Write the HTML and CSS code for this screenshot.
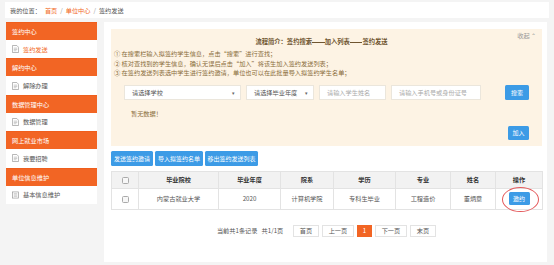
FILE: index.html
```
<!DOCTYPE html>
<html lang="zh-CN">
<head>
    <meta charset="UTF-8">
    <meta name="viewport" content="width=device-width, initial-scale=1.0">
    <title>签约发送</title>
    <link rel="stylesheet" href="styles.css">
</head>
<body>
    <div class="pagina">
        <div class="migas">
            <span>我的位置：</span>
            <a class="miga-link">首页</a>
            <span class="sep">/</span>
            <a class="miga-link">单位中心</a>
            <span class="sep">/</span>
            <span class="miga-actual">签约发送</span>
        </div>

        <div class="cuerpo">
            <div class="menu">
                <div class="menu-titulo">签约中心</div>
                <div class="menu-item activo">
                    <svg class="menu-icono" viewBox="0 0 8 9"><path d="M0.5 0.5h5l2 2v6h-7z" fill="#fff" stroke="#999" stroke-width="0.8"/><path d="M2 3.5h4M2 5h4M2 6.5h3" stroke="#aaa" stroke-width="0.7"/></svg>
                    签约发送
                </div>
                <div class="menu-titulo">解约中心</div>
                <div class="menu-item">
                    <svg class="menu-icono" viewBox="0 0 8 9"><path d="M0.5 0.5h5l2 2v6h-7z" fill="#fff" stroke="#999" stroke-width="0.8"/><path d="M2 3.5h4M2 5h4M2 6.5h3" stroke="#aaa" stroke-width="0.7"/></svg>
                    解除办理
                </div>
                <div class="menu-titulo">数据管理中心</div>
                <div class="menu-item">
                    <svg class="menu-icono" viewBox="0 0 8 9"><path d="M0.5 0.5h5l2 2v6h-7z" fill="#fff" stroke="#999" stroke-width="0.8"/><path d="M2 3.5h4M2 5h4M2 6.5h3" stroke="#aaa" stroke-width="0.7"/></svg>
                    数据管理
                </div>
                <div class="menu-titulo">网上就业市场</div>
                <div class="menu-item">
                    <svg class="menu-icono" viewBox="0 0 8 9"><path d="M0.5 0.5h5l2 2v6h-7z" fill="#fff" stroke="#999" stroke-width="0.8"/><path d="M2 3.5h4M2 5h4M2 6.5h3" stroke="#aaa" stroke-width="0.7"/></svg>
                    我要招聘
                </div>
                <div class="menu-titulo">单位信息维护</div>
                <div class="menu-item">
                    <svg class="menu-icono" viewBox="0 0 8 9"><rect x="0.5" y="1" width="7" height="7" fill="#fff" stroke="#999" stroke-width="0.8"/><path d="M2 3h4M2 4.5h4M2 6h4" stroke="#aaa" stroke-width="0.7"/></svg>
                    基本信息维护
                </div>
            </div>

            <div class="contenido">
                <div class="aviso">
                    <div class="aviso-cabecera">
                        <span></span>
                        <div class="aviso-titulo">流程简介：签约搜索<span class="raya"></span>加入列表<span class="raya"></span>签约发送</div>
                        <span class="recoger">收起 <span class="flecha">&#8963;</span></span>
                    </div>
                    <div class="aviso-linea">① 在搜索栏输入拟签约学生信息，点击“搜索”进行查找；</div>
                    <div class="aviso-linea">② 核对查找到的学生信息，确认无误后点击“加入”将该生加入签约发送列表；</div>
                    <div class="aviso-linea">③ 在签约发送列表选中学生进行签约邀请，单位也可以在此批量导入拟签约学生名单；</div>

                    <div class="filtros">
                        <div class="campo selector escuela">请选择学校<span class="triangulo">&#9662;</span></div>
                        <div class="campo selector anio">请选择毕业年度<span class="triangulo">&#9662;</span></div>
                        <div class="campo nombre">请输入学生姓名</div>
                        <div class="campo telefono">请输入手机号或身份证号</div>
                        <button class="boton buscar">搜索</button>
                    </div>

                    <div class="vacio">暂无数据！</div>
                    <div class="fila-agregar">
                        <button class="boton agregar">加入</button>
                    </div>
                </div>

                <div class="acciones">
                    <button class="boton accion">发送签约邀请</button>
                    <button class="boton accion">导入拟签约名单</button>
                    <button class="boton accion">移出签约发送列表</button>
                </div>

                <table class="tabla">
                    <thead>
                        <tr>
                            <th class="col-check"><span class="casilla"></span></th>
                            <th class="col-escuela">毕业院校</th>
                            <th class="col-anio">毕业年度</th>
                            <th class="col-facultad">院系</th>
                            <th class="col-titulo">学历</th>
                            <th class="col-carrera">专业</th>
                            <th class="col-nombre">姓名</th>
                            <th class="col-op">操作</th>
                        </tr>
                    </thead>
                    <tbody>
                        <tr>
                            <td><span class="casilla"></span></td>
                            <td>内蒙古就业大学</td>
                            <td>2020</td>
                            <td>计算机学院</td>
                            <td>专科生毕业</td>
                            <td>工程造价</td>
                            <td>董炳意</td>
                            <td class="celda-op">
                                <button class="boton invitar">邀约</button>
                                <span class="marca"></span>
                            </td>
                        </tr>
                    </tbody>
                </table>

                <div class="paginacion">
                    <span class="resumen">当前共1条记录&nbsp;&nbsp;&nbsp;共1/1页</span>
                    <span class="pag-boton">首页</span>
                    <span class="pag-boton">上一页</span>
                    <span class="pag-boton actual">1</span>
                    <span class="pag-boton">下一页</span>
                    <span class="pag-boton">末页</span>
                </div>
            </div>
        </div>
    </div>
</body>
</html>
```

FILE: styles.css
```
* {
    box-sizing: border-box;
}

body {
    margin: 0;
    background: #f4f4f4;
    font-family: "Noto Sans CJK SC", "Noto Sans", sans-serif;
    font-size: 6.2px;
    color: #555;
}

.pagina {
    width: 554px;
    height: 265px;
    padding: 2px 5px 0 5px;
}

/* barra de ubicacion */
.migas {
    height: 16px;
    background: #fff;
    display: flex;
    align-items: center;
    padding-left: 5px;
    color: #555;
}

.migas span:first-child {
    margin-right: 4px;
}

.miga-link {
    color: #f26a25;
}

.sep {
    color: #999;
    margin: 0 3px;
}

.miga-actual {
    color: #555;
}

.cuerpo {
    display: flex;
    gap: 7px;
    margin-top: 4px;
    height: 240px;
}

/* menu lateral */
.menu {
    width: 91px;
    margin-left: 1px;
}

.menu-titulo {
    height: 18px;
    line-height: 18px;
    background: #f26524;
    color: #fff;
    padding-left: 6px;
    border-top: 1px solid #ef5e1c;
}

.menu-item {
    height: 18.4px;
    background: #fff;
    display: flex;
    align-items: center;
    gap: 4px;
    padding-left: 6px;
    color: #555;
}

.menu-item.activo {
    color: #f26a25;
}

.menu-icono {
    width: 7px;
    height: 8px;
}

/* contenido */
.contenido {
    width: 443px;
    background: #fff;
    padding: 7px 5px 0 7px;
}

.aviso {
    background: #fdf3e4;
    padding: 2px 13px 6px 3px;
    color: #8a6d3b;
}

.aviso-cabecera {
    display: grid;
    grid-template-columns: 1fr auto 1fr;
    align-items: start;
}

.aviso-titulo {
    margin-top: 6px;
    line-height: 10px;
    font-weight: bold;
    font-size: 6.3px;
    color: #6f5530;
}

/* raya larga entre pasos */
.raya {
    display: inline-block;
    width: 12.6px;
    height: 0.8px;
    background: #6f5530;
    vertical-align: middle;
}

.recoger {
    justify-self: end;
    margin-right: -7px;
    line-height: 10px;
    color: #999;
}

.flecha {
    font-size: 6px;
}

.aviso-linea {
    line-height: 9.5px;
}

.aviso-cabecera + .aviso-linea {
    margin-top: 2px;
}

.filtros {
    display: flex;
    gap: 5px;
    margin-top: 7px;
    padding-left: 10px;
}

.campo {
    height: 15px;
    background: #fff;
    border: 1px solid #ebe6dc;
    display: flex;
    align-items: center;
    padding-left: 7px;
    color: #aaa;
}

.selector {
    color: #555;
    justify-content: space-between;
    padding-right: 5px;
}

.triangulo {
    font-size: 5px;
    color: #666;
}

.escuela {
    width: 117px;
}

.anio {
    width: 68px;
}

.nombre {
    width: 67px;
}

.telefono {
    width: 90px;
}

.boton {
    border: none;
    border-radius: 1.5px;
    background: #3c9be6;
    color: #fff;
    font-family: inherit;
    font-size: 6px;
    padding: 0;
    cursor: pointer;
}

.buscar {
    width: 24px;
    height: 15px;
    margin-left: auto;
}

.vacio {
    margin-top: 9px;
    padding-left: 17px;
    line-height: 10px;
}

.fila-agregar {
    display: flex;
    justify-content: flex-end;
    margin-top: 7px;
}

.agregar {
    width: 21px;
    height: 14px;
}

/* acciones */
.acciones {
    display: flex;
    gap: 2px;
    margin-top: 5px;
}

.accion {
    height: 15px;
}

.acciones .accion:nth-child(1) {
    width: 42px;
}

.acciones .accion:nth-child(2) {
    width: 48px;
}

.acciones .accion:nth-child(3) {
    width: 53px;
}

/* tabla */
.tabla {
    width: 431px;
    margin-top: 5px;
    border-collapse: collapse;
    table-layout: fixed;
}

.tabla th,
.tabla td {
    border: 1px solid #e3e3e3;
    text-align: center;
    padding: 0;
}

.tabla th {
    height: 17px;
    background: #f2f2f2;
    color: #333;
    font-weight: bold;
}

.tabla td {
    height: 21px;
    color: #555;
}

.col-check { width: 27px; }
.col-escuela { width: 80px; }
.col-anio { width: 62px; }
.col-facultad { width: 53px; }
.col-titulo { width: 62px; }
.col-carrera { width: 55px; }
.col-nombre { width: 45px; }
.col-op { width: 47px; }

.casilla {
    display: inline-block;
    width: 7px;
    height: 7px;
    border: 1px solid #aaa;
    border-radius: 1.5px;
    background: #f7f7f7;
    vertical-align: middle;
}

.celda-op {
    position: relative;
}

.invitar {
    width: 21px;
    height: 13px;
}

/* marca roja sobre el boton */
.marca {
    position: absolute;
    left: 6px;
    top: -2px;
    width: 37px;
    height: 25px;
    border: 1px solid #e4585a;
    border-radius: 50%;
}

/* paginacion */
.paginacion {
    display: flex;
    justify-content: center;
    align-items: center;
    gap: 2.5px;
    margin-top: 15px;
}

.resumen {
    margin-right: 7px;
    color: #555;
}

.pag-boton {
    height: 12px;
    line-height: 10px;
    padding: 0 6px;
    border: 1px solid #e3e3e3;
    color: #555;
}

.pag-boton.actual {
    background: #f26524;
    border-color: #f26524;
    color: #fff;
    padding: 0 5px;
}
```
